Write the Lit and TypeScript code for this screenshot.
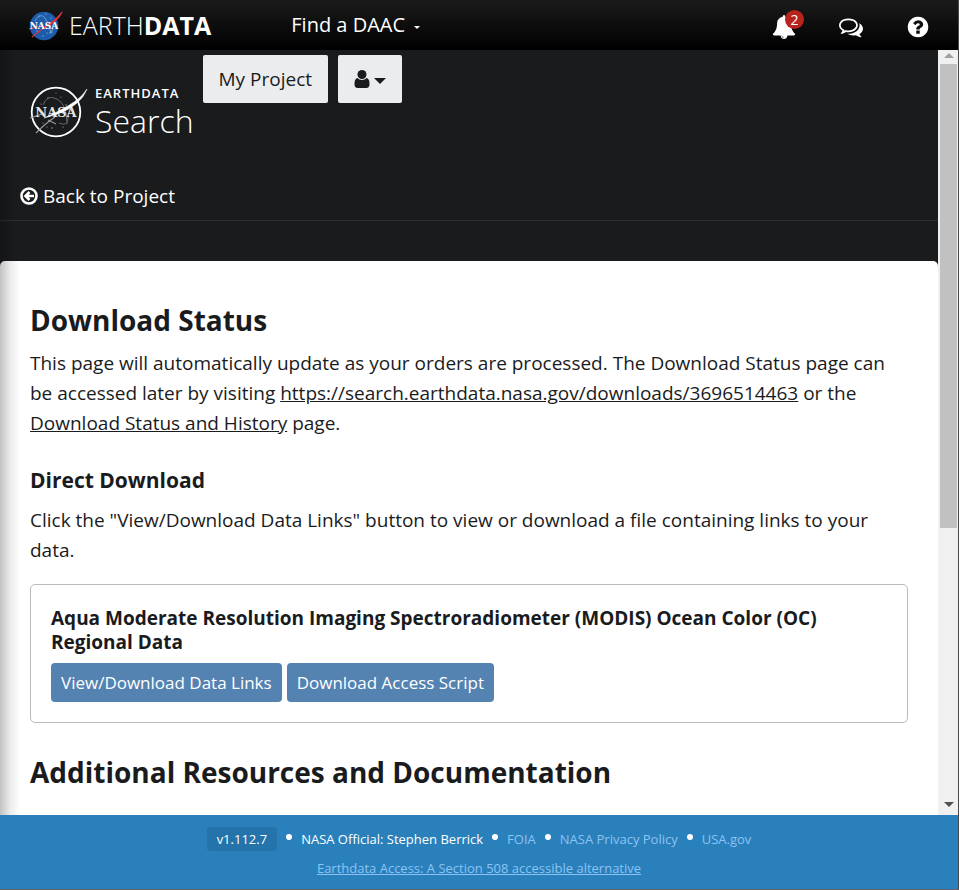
import { LitElement, html, css, svg } from "lit";
import { customElement, property } from "lit/decorators.js";

const ICONS: Record<string, string> = {
  bell: "M912 1696q0-16-16-16-59 0-101.500-42.500t-42.500-101.500q0-16-16-16t-16 16q0 73 51.500 124.500t124.500 51.500q16 0 16-16zm816-288q0 52-38 90t-90 38h-448q0 106-75 181t-181 75-181-75-75-181h-448q-52 0-90-38t-38-90q50-42 91-88t85-119.500 74.500-158.500 50-206 19.500-260q0-152 117-282.500t307-158.500q-8-19-8-39 0-40 28-68t68-28 68 28 28 68q0 20-8 39 190 28 307 158.500t117 282.500q0 139 19.500 260t50 206 74.500 158.500 85 119.500 91 88z",
  comments:
    "M704 384q-153 0-286 52t-211.500 141-78.500 191q0 82 53 158t149 132l97 56-35 84q34-20 62-39l44-31 53 10q78 14 153 14 153 0 286-52t211.500-141 78.500-191-78.500-191-211.500-141-286-52zm0-128q191 0 353.500 68.500t256.500 186.500 94 257-94 257-256.500 186.500-353.500 68.500q-86 0-176-16-124 88-278 128-36 9-86 16h-3q-11 0-20.500-8t-11.500-21q-1-3-1-6.500t.5-6.500 2-6l2.500-5 3.500-5.500 4-5 4.500-5 4-4.500q5-6 23-25t26-29.500 22.500-29 25-38.500 20.500-44q-124-72-195-177t-71-224q0-139 94-257t256.500-186.500 353.500-68.500zm822 1169q10 24 20.500 44t25 38.500 22.500 29 26 29.500 23 25q1 1 4 4.500t4.500 5 4 5 3.500 5.500l2.500 5 2 6 .5 6.500-1 6.500q-3 14-13 22t-22 7q-50-7-86-16-154-40-278-128-90 16-176 16-271 0-472-132 58 4 88 4 161 0 309-45t264-129q125-92 192-212t67-254q0-77-23-152 129 71 204 178t75 230q0 120-71 224.500t-195 176.500z",
  help: "M1024 1376v-192q0-14-9-23t-23-9h-192q-14 0-23 9t-9 23v192q0 14 9 23t23 9h192q14 0 23-9t9-23zm256-672q0-88-55.500-163t-138.500-116-170-41q-243 0-371 213-15 24 8 42l132 100q7 6 19 6 16 0 25-12 53-68 86-92 34-24 86-24 48 0 85.500 26t37.500 59q0 38-20 61t-68 45q-63 28-115.500 86.500t-52.500 125.500v36q0 14 9 23t23 9h192q14 0 23-9t9-23q0-19 21.500-49.500t54.500-49.500q32-18 49-28.500t46-35 44.500-48 28-60.500 12.500-81zm384 192q0 209-103 385.500t-279.500 279.500-385.500 103-385.500-103-279.500-279.500-103-385.500 103-385.500 279.500-279.500 385.500-103 385.500 103 279.500 279.500 103 385.500z",
};

@customElement("fa-icon")
class FaIcon extends LitElement {
  @property() name = "bell";
  @property({ type: Number }) size = 24;
  static styles = css`
    :host { display: inline-flex; }
    svg { fill: currentColor; }
  `;
  render() {
    return html`<svg width=${this.size} height=${this.size} viewBox="0 0 1792 1792" aria-hidden="true">
      <path d=${ICONS[this.name]} />
    </svg>`;
  }
}

const stars = svg`
  <circle cx="20" cy="13" r=".7" /><circle cx="13" cy="19" r=".6" /><circle cx="33" cy="12" r=".6" />
  <circle cx="38" cy="20" r=".7" /><circle cx="15" cy="38" r=".6" /><circle cx="24" cy="43" r=".7" />
  <circle cx="35" cy="42" r=".6" /><circle cx="28" cy="8" r=".5" /><circle cx="19" cy="42" r=".5" />`;

@customElement("app-root")
class AppRoot extends LitElement {
  static styles = css`
    :host {
      display: flex;
      flex-direction: column;
      height: 100vh;
      box-sizing: border-box;
      border-right: 1px solid #4a4a4c;
      border-bottom: 1px solid #626466;
      font: 400 19px/30px "Open Sans", "Noto Sans", sans-serif;
      color: #1a1b1d;
      background: #fff;
    }
    * { box-sizing: border-box; }
    a { color: inherit; }
    button { font: inherit; color: inherit; border: 0; padding: 0; background: none; cursor: pointer; }
    h1, h2, h3, p { margin: 0; }

    .topbar {
      flex: none;
      display: flex;
      align-items: center;
      height: 50px;
      padding: 0 28px;
      color: #fff;
      background: linear-gradient(#1b1b1b, #000);
    }
    .brand { display: flex; align-items: center; gap: 5px; font-size: 25px; text-decoration: none; font-weight: 300; }
    .brand b { font-weight: 700; }
    .daac { display: flex; align-items: center; gap: 9px; margin-left: 80px; font-size: 20px; }
    .daac i { border: 3px solid transparent; border-top-color: #fff; border-bottom: 0; margin-top: 5px; }
    .tools { display: flex; align-items: center; gap: 43px; margin-left: auto; padding-top: 3px; }
    .tools button { display: flex; position: relative; }
    .badge {
      position: absolute;
      left: 13px;
      top: -5px;
      width: 19px;
      height: 19px;
      border-radius: 50%;
      background: #b7231d;
      font-size: 14px;
      line-height: 19px;
      text-align: center;
    }

    .viewport { flex: 1; min-height: 0; display: flex; position: relative; }
    .viewport::before {
      content: "";
      position: absolute;
      inset: 0 auto 0 0;
      width: 20px;
      background: linear-gradient(90deg, rgba(0, 0, 0, 0.24), rgba(0, 0, 0, 0.08) 50%, transparent);
      pointer-events: none;
      z-index: 1;
    }
    .page { flex: 1; min-width: 0; overflow: hidden; background: #1a1b1d; }
    .scrollbar {
      flex: none;
      display: flex;
      flex-direction: column;
      align-items: center;
      width: 20px;
      padding: 3px 0 8px 1px;
      background: #f0f0f0;
    }
    .up { border: 5px solid transparent; border-bottom-color: #a0a0a0; border-top: 0; }
    .thumb { flex: 0 1 464px; width: 17px; margin-top: 6px; background: #c1c1c1; }
    .down { border: 5px solid transparent; border-top-color: #505050; border-bottom: 0; margin-top: auto; }

    .masthead { display: flex; align-items: flex-start; padding: 5px 28px 0 28px; color: #fff; }
    .search-logo { display: flex; align-items: center; gap: 6px; margin: 29px 9px 0 0; text-decoration: none; }
    .search-logo span { display: flex; flex-direction: column; }
    .search-logo small { font-size: 13px; line-height: 18px; font-weight: 600; letter-spacing: 1px; }
    .search-logo strong { font-size: 32px; line-height: 38px; font-weight: 300; }
    .light { height: 48px; padding: 0 16px; border-radius: 2px; background: #ebecee; color: #1a1b1d; }
    .user { display: flex; align-items: center; gap: 4px; margin-left: 10px; }
    .user i { border: 6px solid transparent; border-top-color: #1a1b1d; border-bottom: 0; margin-top: 4px; }
    .back { margin-top: 41px; padding: 0 20px 9px; border-bottom: 1px solid #2d2e30; color: #fff; }
    .back a { display: flex; width: fit-content; align-items: center; gap: 5px; text-decoration: none; }
    main { margin-top: 40px; padding: 41px 30px; min-height: 600px; border-radius: 5px 5px 0 0; background: #fff; }
    h1, .more { font-size: 28px; line-height: 36px; font-weight: 700; }
    main p { margin-top: 10px; }
    .direct { margin-top: 27px; font-size: 21px; line-height: 30px; font-weight: 700; }
    .card { margin: 19px 0 31px; padding: 21px 20px 20px; border: 1px solid #b9babb; border-radius: 5px; }
    h3 { font-size: 19px; line-height: 24px; font-weight: 700; }
    .actions { display: flex; flex-wrap: wrap; gap: 5px; margin-top: 9px; }
    .actions button {
      height: 39px;
      padding: 0 10px;
      border-radius: 4px;
      background: #5482b1;
      color: #fff;
      font-size: 17px;
    }

    footer {
      flex: none;
      height: 74px;
      padding-top: 12px;
      background: #2980bb;
      color: #8dc3f3;
      font-size: 13px;
      line-height: 24px;
      text-align: center;
    }
    .facts { display: flex; justify-content: center; gap: 9px; margin-bottom: 5px; }
    .facts a { text-decoration: none; }
    .facts i { width: 6px; height: 6px; border-radius: 50%; background: #fff; margin-top: 7px; }
    .version { padding: 0 10px; border-radius: 3px; background: #2474ab; color: #fff; }
    .official { color: #fff; }
  `;

  colourLogo() {
    return html`<svg width="36" height="32" viewBox="-1 0 36 32" role="img" aria-label="NASA">
      <circle cx="15" cy="17" r="14.300" fill="#1c5cab" />
      <g fill="#c6daf0">
        <circle cx="10" cy="7" r=".6" /><circle cx="17" cy="5" r=".6" /><circle cx="22" cy="9" r=".6" />
        <circle cx="8" cy="22" r=".6" /><circle cx="14" cy="27" r=".6" /><circle cx="23" cy="23" r=".6" />
        <circle cx="18" cy="24" r=".5" />
      </g>
      <path d="M6 12q5-9 10-3t6 16M20 24q5-2 4-8" fill="none" stroke="#8fb2dd" stroke-width=".7" />
      <path d="M0 20L14 17M33 3Q29 10 19 15.500L3 28" stroke="#e2323e" fill="none" stroke-width="1.100" />
      <path d="M34 2Q29 14 15 19Q26 11 34 2Z" fill="#e2323e" />
      <text x="15" y="20" text-anchor="middle" font-family="DejaVu Serif, serif" font-size="9" font-weight="700" fill="#fff">NASA</text>
    </svg>`;
  }

  monoLogo() {
    return html`<svg width="61" height="54" viewBox="0 0 61 54" role="img" aria-label="NASA">
      <circle cx="28" cy="27" r="24.300" fill="none" stroke="#fff" stroke-width="1.800" />
      <g fill="#aaa">${stars}</g>
      <path d="M15 20q4-11 14-6t10 25M31 38q9 4 9-5l2-12" fill="none" stroke="#66676a" stroke-width="1" />
      <path d="M2 33L14 29M8 48Q18 38 27 32M20 35L28 39" stroke="#999" stroke-width="1.200" fill="none" />
      <text x="28" y="32" text-anchor="middle" font-family="DejaVu Serif, serif" font-size="13" font-weight="700" fill="#e4e4e4">NASA</text>
      <path d="M59 4Q53 20 30 29L16 33Q36 24 46 17Q54 12 59 4Z" fill="#fff" stroke="#fff" stroke-width=".5" />
    </svg>`;
  }

  render() {
    return html`
      <header class="topbar">
        <a class="brand" href="#">${this.colourLogo()}<span>EARTH<b>DATA</b></span></a>
        <button class="daac">Find a DAAC <i></i></button>
        <div class="tools">
          <button aria-label="Notifications"><fa-icon name="bell" size="24"></fa-icon><span class="badge">2</span></button>
          <button aria-label="Feedback"><fa-icon name="comments" size="24"></fa-icon></button>
          <button aria-label="Help"><fa-icon name="help" size="24"></fa-icon></button>
        </div>
      </header>
      <div class="viewport">
        <div class="page">
          <div class="masthead">
            <a class="search-logo" href="#">${this.monoLogo()}<span><small>EARTHDATA</small><strong>Search</strong></span></a>
            <button class="light">My Project</button>
            <button class="light user" aria-label="User menu">
              <svg width="16" height="18" viewBox="0 0 16 18" fill="#1a1b1d" aria-hidden="true">
                <circle cx="8" cy="4.500" r="4.500" />
                <path d="M3.500 8Q5 10 8 10T12.500 8Q16 9 15.500 15Q15 18 12.500 18H3.500Q1 18 .5 15Q0 9 3.500 8Z" />
              </svg><i></i>
            </button>
          </div>
          <nav class="back">
            <a href="#">
              <svg width="18" height="18" viewBox="0 0 18 18" fill="none" stroke="#fff" stroke-width="2.600" aria-hidden="true">
                <circle cx="9" cy="9" r="7.500" /><path d="M14 9H6M9.500 5L5.500 9L9.500 13" />
              </svg>Back to Project</a>
          </nav>
          <main>
            <h1>Download Status</h1>
            <p>This page will automatically update as your orders are processed. The Download Status page can be accessed later by visiting <a href="#">https://search.earthdata.nasa.gov/downloads/3696514463</a> or the <a href="#">Download Status and History</a> page.</p>
            <h2 class="direct">Direct Download</h2>
            <p>Click the "View/Download Data Links" button to view or download a file containing links to your data.</p>
            <section class="card">
              <h3>Aqua Moderate Resolution Imaging Spectroradiometer (MODIS) Ocean Color (OC) Regional Data</h3>
              <div class="actions"><button>View/Download Data Links</button><button>Download Access Script</button></div>
            </section>
            <h2 class="more">Additional Resources and Documentation</h2>
          </main>
        </div>
        <div class="scrollbar" aria-hidden="true"><i class="up"></i><i class="thumb"></i><i class="down"></i></div>
      </div>
      <footer>
        <div class="facts">
          <span class="version">v1.112.7</span><i></i><span class="official">NASA Official: Stephen Berrick</span><i></i>
          <a href="#">FOIA</a><i></i><a href="#">NASA Privacy Policy</a><i></i><a href="#">USA.gov</a>
        </div>
        <a href="#">Earthdata Access: A Section 508 accessible alternative</a>
      </footer>
    `;
  }
}
